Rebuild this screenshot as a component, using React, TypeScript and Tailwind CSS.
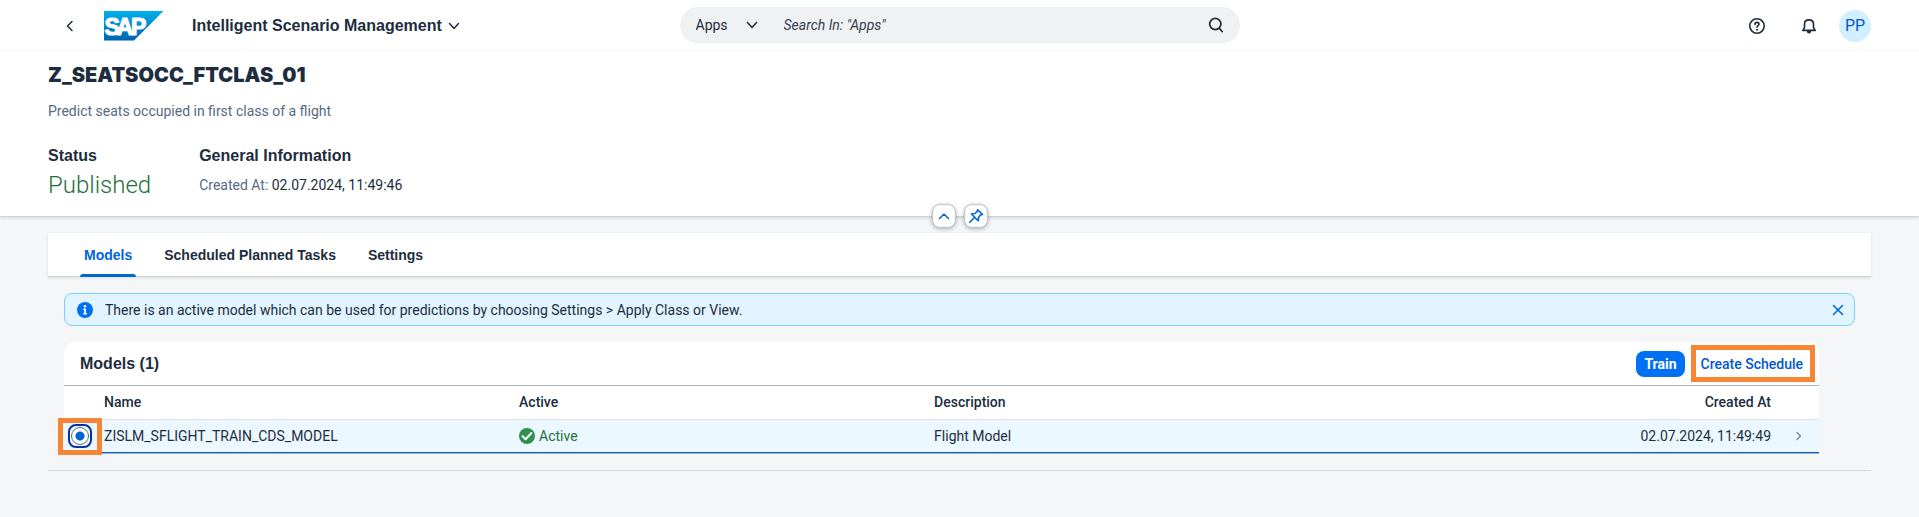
import { useState } from "react";

const TABS = ["Models", "Scheduled Planned Tasks", "Settings"];

const MODELS = [
  {
    name: "ZISLM_SFLIGHT_TRAIN_CDS_MODEL",
    status: "Active",
    description: "Flight Model",
    createdAt: "02.07.2024, 11:49:49",
  },
];

function Chevron({ d, className }: { d: string; className: string }) {
  return (
    <svg viewBox="0 0 16 16" className={className} fill="none" stroke="currentColor" strokeWidth="1.5" strokeLinecap="round" strokeLinejoin="round" aria-hidden="true">
      <path d={d} />
    </svg>
  );
}

function SapLogo() {
  return (
    <svg viewBox="0 0 60 30" className="h-[30px] w-[60px]" role="img" aria-label="SAP">
      <defs>
        <linearGradient id="sap-blue" x1="0" y1="0" x2="0" y2="1">
          <stop offset="0" stopColor="#00b1eb" />
          <stop offset="0.5" stopColor="#0088cf" />
          <stop offset="1" stopColor="#0063b1" />
        </linearGradient>
      </defs>
      <path d="M0 0H59.5L30 29.5H0Z" fill="url(#sap-blue)" />
      <text y="23.5" fontFamily="Liberation Sans, sans-serif" fontWeight="700" fontSize="23" fill="#fff" stroke="#fff" strokeWidth="1.2" strokeLinejoin="round">
        <tspan x="0.5">S</tspan>
        <tspan x="12.5">A</tspan>
        <tspan x="27">P</tspan>
      </text>
    </svg>
  );
}

function ShellBar() {
  return (
    <header className="grid h-[51px] grid-cols-[1fr_560px_1fr] items-center px-12">
      <div className="flex items-center">
        <button type="button" aria-label="Back" className="flex h-8 w-11 items-center justify-center">
          <Chevron d="M10 3.5L5.5 8L10 12.5" className="size-4" />
        </button>
        <a href="#home" className="ml-3">
          <SapLogo />
        </a>
        <button type="button" className="ml-7 flex items-center gap-1 font-['Liberation_Sans',sans-serif] text-base font-bold">
          Intelligent Scenario Management
          <Chevron d="M3.5 5.5L8 10.5L12.5 5.5" className="size-4" />
        </button>
      </div>
      <form role="search" className="-mt-0.5 flex h-9 items-center rounded-full bg-[#eff1f2] px-4 text-sm" onSubmit={(e) => e.preventDefault()}>
        <div className="relative flex items-center">
          <select aria-label="Search scope" className="w-16 appearance-none bg-transparent outline-none">
            <option>Apps</option>
          </select>
          <Chevron d="M3.5 5.5L8 10.5L12.5 5.5" className="pointer-events-none absolute right-0 size-4" />
        </div>
        <input type="search" aria-label="Search" placeholder={'Search In: "Apps"'} className="ml-6 min-w-0 flex-1 bg-transparent outline-none placeholder:text-[#33404f] placeholder:italic" />
        <button type="submit" aria-label="Search" className="flex size-4 items-center justify-center">
          <svg viewBox="0 0 16 16" className="size-4" fill="none" stroke="currentColor" strokeWidth="1.7" strokeLinecap="round">
            <circle cx="7.3" cy="7" r="5.6" />
            <path d="M11.3 11.3L14.2 14.6" />
          </svg>
        </button>
      </form>
      <div className="flex items-center justify-end">
        <button type="button" aria-label="Help">
          <svg viewBox="0 0 16 16" className="size-4" fill="none" stroke="currentColor" strokeWidth="1.6" strokeLinecap="round">
            <circle cx="8" cy="8" r="7.2" />
            <path d="M6 6.4C6 5.1 6.9 4.4 8 4.4S10 5.2 10 6.3C10 7.6 8 7.7 8 9.3" />
            <circle cx="8" cy="11.8" r="1" fill="currentColor" stroke="none" />
          </svg>
        </button>
        <button type="button" aria-label="Notifications" className="ml-9">
          <svg viewBox="0 0 16 16" className="size-4" fill="none" stroke="currentColor" strokeWidth="1.6" strokeLinejoin="round">
            <path d="M1.8 12.4L3.5 9.8V6.2C3.5 3.6 5.4 1.9 8 1.9S12.5 3.6 12.5 6.2V9.8L14.2 12.4Z" />
            <path d="M5.8 13H10.2C10.2 14.7 9.2 15.5 8 15.5S5.8 14.7 5.8 13Z" fill="currentColor" stroke="none" />
          </svg>
        </button>
        <button type="button" aria-label="Profile of PP" className="ml-[22px] flex size-8 items-center justify-center rounded-full bg-[#d1efff] text-base text-[#0057d2]">
          PP
        </button>
      </div>
    </header>
  );
}

const TOGGLE =
  "flex size-6 items-center justify-center rounded-lg border border-[#bcc3ca] bg-white text-[#0064d9] shadow-[0_1px_4px_rgba(34,53,72,0.35)]";

const HEADING = "font-['Liberation_Sans',sans-serif] text-base leading-[26px] font-bold";

function ObjectHeader() {
  return (
    <section className="relative border-b border-[#d0d4d8] px-12 pb-[17px] shadow-[0_1px_3px_rgba(34,53,72,0.15)]">
      <h1 className="pt-3 font-['Inter','Roboto',sans-serif] text-xl leading-6 font-black">Z_SEATSOCC_FTCLAS_01</h1>
      <p className="mt-4 text-sm leading-4 text-[#556b82]">Predict seats occupied in first class of a flight</p>
      <div className="mt-6 flex gap-12">
        <div>
          <h2 className={HEADING}>Status</h2>
          <p className="mt-0.5 text-2xl leading-7 font-light text-[#256f3a]">Published</p>
        </div>
        <div>
          <h2 className={HEADING}>General Information</h2>
          <p className="mt-1.5 text-sm leading-5">
            <span className="text-[#556b82]">Created At:</span> 02.07.2024, 11:49:46
          </p>
        </div>
      </div>
      <div className="absolute inset-x-0 -bottom-3 flex justify-center gap-2">
        <button type="button" aria-label="Collapse header" className={TOGGLE}>
          <Chevron d="M3.5 10.5L8 6L12.5 10.5" className="size-4" />
        </button>
        <button type="button" aria-label="Pin header" className={TOGGLE}>
          <svg viewBox="0 0 16 16" className="size-4" fill="none" stroke="currentColor" strokeWidth="1.6" strokeLinecap="round" strokeLinejoin="round">
            <path d="M9.7 1.8L14.4 6.4L12.4 7L10.6 9.4L10.2 12.8L3.4 6L6.8 5.5L9.1 3.6Z" />
            <path d="M6.5 9.5L1.8 14.2" />
          </svg>
        </button>
      </div>
    </section>
  );
}

function ModelsTable() {
  const [selected, setSelected] = useState(0);
  return (
    <section className="mt-4 mr-9 rounded-t-xl border-b border-[#a8b2bd] bg-white" aria-labelledby="models-title">
      <div className="flex h-11 items-center border-b border-[#a8b2bd] pr-2 pl-4">
        <h2 id="models-title" className="flex-1 font-['Liberation_Sans',sans-serif] text-base font-bold">
          Models (1)
        </h2>
        <button type="button" className="h-[26px] rounded-lg bg-[#0070f2] px-2 text-sm font-bold text-white">
          Train
        </button>
        <div className="relative ml-2 flex">
          <button type="button" className="h-[26px] px-2 text-sm font-medium text-[#0057d2]">
            Create Schedule
          </button>
          <span className="pointer-events-none absolute -top-[6px] -right-1 -bottom-[5px] -left-0.5 border-[5px] border-[#f78536]" />
        </div>
      </div>
      <table className="w-full table-fixed border-collapse text-sm">
        <colgroup>
          <col className="w-8" />
          <col className="w-[23.65%]" />
          <col className="w-[23.65%]" />
          <col className="w-[23.65%]" />
          <col />
          <col className="w-10" />
        </colgroup>
        <thead>
          <tr className="h-[33px] border-b border-[#e0e2e4] text-left">
            <th aria-label="Selection" />
            <th className="px-2 font-medium">Name</th>
            <th className="px-2 font-medium">Active</th>
            <th className="px-2 font-medium">Description</th>
            <th className="px-2 text-right font-medium">Created At</th>
            <th aria-label="Details" />
          </tr>
        </thead>
        <tbody>
          {MODELS.map((m, i) => (
            <tr key={m.name} className="h-[33px] border-b border-[#0064d9] bg-[#ebf8ff]">
              <td className="relative p-0">
                <div className="ml-1 flex size-6 items-center justify-center rounded-lg border-2 border-[#0032a5] bg-white">
                  <input
                    type="radio"
                    name="model"
                    aria-label={m.name}
                    checked={selected === i}
                    onChange={() => setSelected(i)}
                    className="size-[18px] appearance-none rounded-full border border-[#556b82] checked:bg-[radial-gradient(circle,#0064d9_4px,transparent_5px)]"
                  />
                </div>
                <span className="pointer-events-none absolute -top-[2px] -right-[6px] -bottom-[3px] -left-[6px] border-[5px] border-[#f78536]" />
              </td>
              <td className="px-2">{m.name}</td>
              <td className="px-2">
                <span className="flex items-center gap-1 text-[#256f3a]">
                  <svg viewBox="0 0 16 16" className="size-4" aria-hidden="true">
                    <circle cx="8" cy="8" r="8" fill="#30914c" />
                    <path d="M3.6 8.3L6.6 11.2L12.4 5" fill="none" stroke="#fff" strokeWidth="2" strokeLinecap="round" strokeLinejoin="round" />
                  </svg>
                  {m.status}
                </span>
              </td>
              <td className="px-2">{m.description}</td>
              <td className="px-2 text-right">{m.createdAt}</td>
              <td className="p-0">
                <Chevron d="M6 4.5L9.5 8L6 11.5" className="ml-3 size-4 text-[#758ca4]" />
              </td>
            </tr>
          ))}
        </tbody>
      </table>
    </section>
  );
}

export default function App() {
  const [tab, setTab] = useState(TABS[0]);
  const [showMessage, setShowMessage] = useState(true);
  return (
    <div className="flex min-h-screen flex-col bg-[#f5f6f7] font-['Roboto','Noto_Sans',sans-serif] text-[#1d2d3e]">
      <div className="bg-white">
        <ShellBar />
        <ObjectHeader />
      </div>
      <main className="mx-12 mt-4">
        <nav role="tablist" className="flex h-11 gap-6 border-b border-[#d0d4d8] bg-white px-8 font-['Liberation_Sans',sans-serif] text-sm font-bold shadow-[0_1px_3px_rgba(34,53,72,0.12)]">
          {TABS.map((t) => (
            <button
              key={t}
              type="button"
              role="tab"
              aria-selected={tab === t}
              onClick={() => setTab(t)}
              className="relative px-1 aria-selected:text-[#0064d9] aria-selected:after:absolute aria-selected:after:inset-x-0 aria-selected:after:-bottom-px aria-selected:after:h-[3px] aria-selected:after:rounded-t-sm aria-selected:after:bg-[#0064d9]"
            >
              {t}
            </button>
          ))}
        </nav>
        <div className="border-b border-[#d5d8db] px-4 py-4">
          {showMessage && (
            <div role="status" className="flex h-[33px] items-center rounded-lg border border-[#7bcfff] bg-[#e1f4ff] pr-2 pl-3 text-sm">
              <svg viewBox="0 0 16 16" className="size-4" aria-hidden="true">
                <circle cx="8" cy="8" r="8" fill="#0070f2" />
                <circle cx="8" cy="4.3" r="1.3" fill="#fff" />
                <path d="M6.2 6.6H9V11H10V12.4H6.2V11H7.2V8H6.2Z" fill="#fff" />
              </svg>
              <p className="ml-3 flex-1">There is an active model which can be used for predictions by choosing Settings &gt; Apply Class or View.</p>
              <button type="button" aria-label="Close message" onClick={() => setShowMessage(false)} className="text-[#0064d9]">
                <Chevron d="M3.5 3.5L12.5 12.5M12.5 3.5L3.5 12.5" className="size-4" />
              </button>
            </div>
          )}
          <ModelsTable />
        </div>
      </main>
    </div>
  );
}
